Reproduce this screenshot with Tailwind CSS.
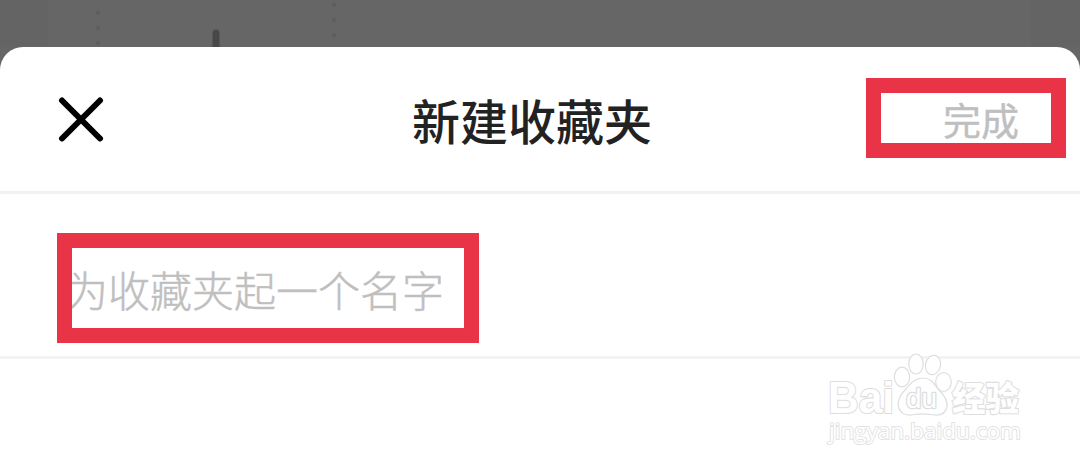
<!DOCTYPE html>
<html lang="zh-CN">
<head>
  <meta charset="UTF-8">
  <meta name="viewport" content="width=device-width, initial-scale=1.0">
  <title>新建收藏夹</title>
  <script src="https://cdn.jsdelivr.net/npm/@tailwindcss/browser@4"></script>
</head>
<body class="relative w-[1080px] h-[469px] overflow-hidden bg-[#666666] font-['Noto_Sans_CJK_SC',sans-serif]">
  <!-- dimmed page behind the sheet -->
  <svg class="block w-full h-[47px] overflow-visible" viewBox="0 0 1080 47" fill="none">
    <path d="M0 0H48V47H0ZM1031 0H1080V47H1031Z" fill="#646464"/>
    <path d="M98 -4V47M334 -12V40" stroke="#5d5d5d" stroke-width="3" stroke-dasharray="4 11"/>
    <path d="M216 33V52" stroke="#484848" stroke-width="7" stroke-linecap="round"/>
  </svg>

  <main class="relative h-[422px] bg-white rounded-t-[23px]">
    <header class="flex items-center justify-between h-[147px] pl-[58px] pr-[14px] border-b-3 border-[#f2f2f2]">
      <button class="w-[46px]" aria-label="关闭">
        <svg class="block size-[46px]" viewBox="0 0 46 46" fill="none" stroke="#000" stroke-width="6" stroke-linecap="round">
          <path d="M4 4.500L42 42.500M42 4.500L4 42.500"/>
        </svg>
      </button>
      <h1 class="ml-[94px] text-[48px] leading-[60px] font-medium text-[#222222]">新建收藏夹</h1>
      <button class="w-[200px] h-[80px] mb-[2px] pr-[32px] border-[15px] border-[#e93448] flex items-center justify-end text-[38px] font-normal text-[#bfbfbf] whitespace-nowrap [-webkit-text-stroke:0.4px_#bfbfbf]">完成</button>
    </header>

    <section class="flex items-center h-[165px] pl-[57px] border-b-3 border-[#f3f3f3]">
      <div class="flex items-center w-[422px] h-[110px] mt-[25px] border-[15px] border-[#e93448] overflow-hidden">
        <span class="-ml-[6px] mt-[3px] text-[42px] leading-[60px] font-light text-[#bfbfbf] whitespace-nowrap [-webkit-text-stroke:0.5px_#bfbfbf]">为收藏夹起一个名字</span>
      </div>
    </section>
  </main>

  <!-- watermark -->
  <svg class="absolute left-[820px] top-[346px]" width="210" height="104" viewBox="0 0 210 104" fill="#fff" stroke="#dedede" stroke-width="1.2" stroke-linejoin="round">
    <g font-family="Liberation Sans, sans-serif" font-weight="700" paint-order="stroke" stroke-width="2.2">
      <text x="8" y="67" font-size="45" textLength="66" lengthAdjust="spacingAndGlyphs">Bai</text>
      <text x="132" y="65" font-size="34" font-family="Noto Sans CJK SC, sans-serif" font-weight="900" textLength="67" lengthAdjust="spacingAndGlyphs">经验</text>
    </g>
    <ellipse cx="82" cy="31" rx="7.7" ry="9.8"/>
    <ellipse cx="96" cy="18" rx="7.2" ry="10"/>
    <ellipse cx="113" cy="19" rx="7.5" ry="9.8" transform="rotate(12 113 19)"/>
    <ellipse cx="123.500" cy="36" rx="7.8" ry="9.500"/>
    <path d="M103 32C93 32 90 39 85 44C80 49 77 54 78.500 61C81 69 88 70 94 68.500C100 67.500 105 67.500 111 68.500C118 70 125 69 127 61C128 54 124 49 119 44C114 38 112 32 103 32Z"/>
    <text x="86" y="62" font-size="27" font-family="Liberation Sans, sans-serif" textLength="31" lengthAdjust="spacingAndGlyphs" paint-order="stroke" stroke-width="2.6">du</text>
    <text x="9" y="93" font-size="21" font-family="Open Sans, sans-serif" stroke="#e2e2e2" paint-order="stroke" stroke-width="1.8" textLength="192" lengthAdjust="spacingAndGlyphs">jingyan.baidu.com</text>
  </svg>
</body>
</html>
